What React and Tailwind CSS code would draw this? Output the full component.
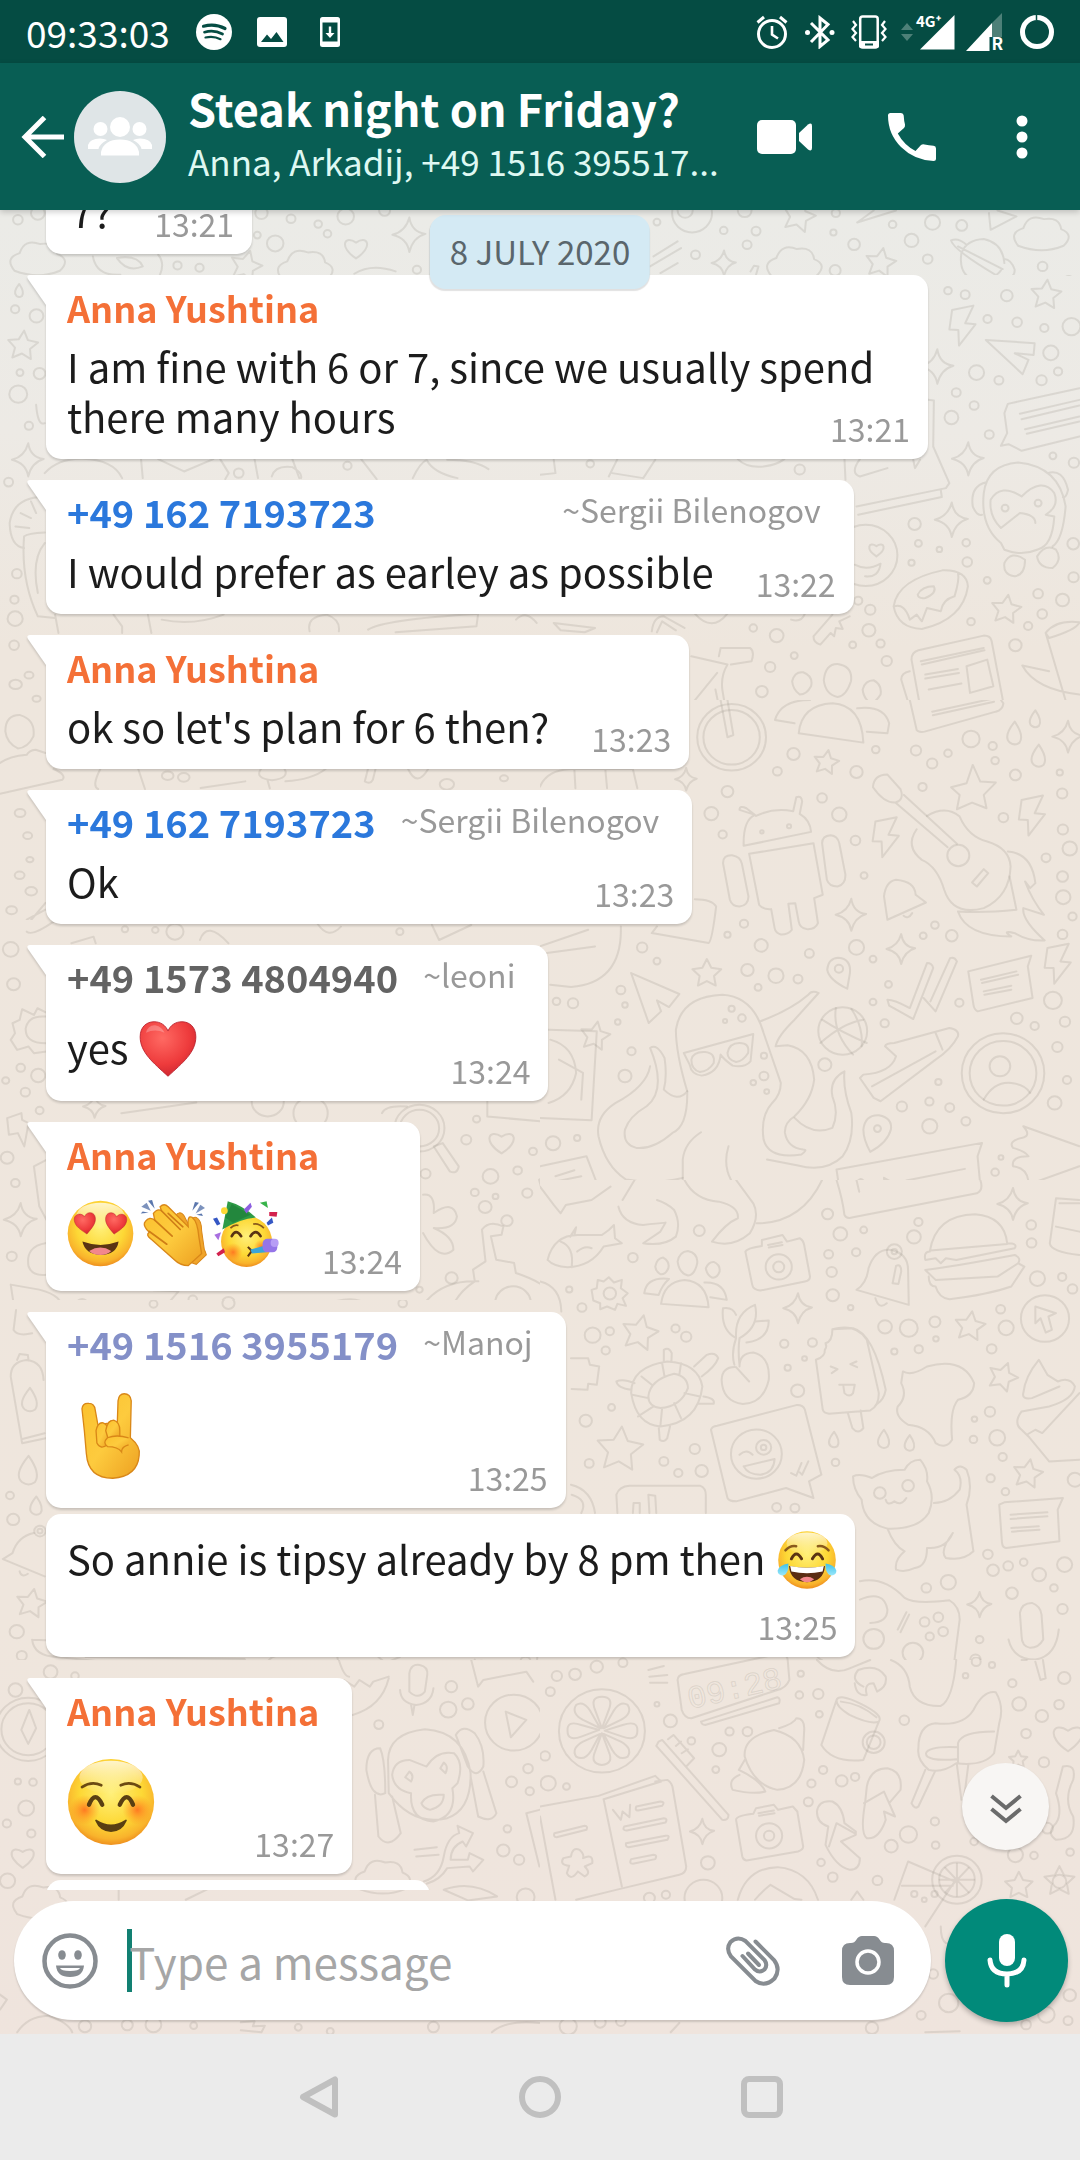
import React from "react";

/* ---------- wallpaper doodles ---------- */

const star = (x, y, r, a = 0) => {
  let d = "";
  for (let i = 0; i < 10; i++) {
    const k = i % 2 ? r * 0.5 : r;
    const t = ((a + i * 36 - 90) * Math.PI) / 180;
    d += `${i ? "L" : "M"}${(x + k * Math.cos(t)).toFixed(1)} ${(y + k * Math.sin(t)).toFixed(1)}`;
  }
  return d + "Z";
};
const spark = (x, y, r) =>
  `M${x} ${y - r}Q${x + r * 0.12} ${y - r * 0.15} ${x + r * 0.9} ${y - r * 0.05}Q${x + r * 0.2} ${y + r * 0.15} ${x} ${y + r}Q${x - r * 0.12} ${y + r * 0.2} ${x - r * 0.95} ${y}Q${x - r * 0.2} ${y - r * 0.2} ${x} ${y - r}Z`;
const heart = (x, y, r) =>
  `M${x} ${y + r}C${x - r * 1.5} ${y} ${x - r} ${y - r * 1.1} ${x} ${y - r * 0.4}C${x + r} ${y - r * 1.1} ${x + r * 1.5} ${y} ${x} ${y + r}Z`;
const cloud = (x, y) =>
  `M${x - 70} ${y + 38}Q${x - 100} ${y} ${x - 55} ${y - 15}Q${x - 40} ${y - 60} ${x + 5} ${y - 42}Q${x + 50} ${y - 50} ${x + 55} ${y - 12}Q${x + 95} ${y + 5} ${x + 62} ${y + 38}Q${x} ${y + 65} ${x - 70} ${y + 38}Z`;
const drop = (x, y, r) => `M${x} ${y - r}Q${x - r} ${y + r * 0.3} ${x - r * 0.4} ${y + r * 0.8}Q${x} ${y + r * 1.1} ${x + r * 0.4} ${y + r * 0.8}Q${x + r * 0.8} ${y + r * 0.2} ${x} ${y - r}Z`;
const bolt = (x, y) => `M${x - 30} ${y - 45}L${x + 32} ${y - 58}L${x + 8} ${y - 5}L${x + 38} ${y - 2}L${x - 10} ${y + 62}L${x - 12} ${y + 15}L${x - 38} ${y + 14}Z`;

/* at: placement of the panel, clip: [x, y, width, height], c: circles, p: outlines */
const PANELS = [
  {
    at: "translate(540 700) scale(.344 .333)",
    clip: [540, 700, 540, 480],
    c: "557 112 100,557 112 82,545 275 17,498 341 20,531 404 12,820 294 14,870 344 21,917 422 14,920 216 18,737 162 18,690 214 13,976 149 11,1093 152 15,1140 191 15,1186 160 11,1253 117 25,1316 138 12,1323 182 11,1382 225 16,1112 261 12,1347 353 14,1511 218 9,1518 281 15,1520 389 15,1540 446 21,1471 474 13,1519 530 16,1521 592 21,1548 650 12,1519 704 14,942 527 10,593 672 12,545 705 9,643 737 19,783 761 13,920 743 22,968 778 10,1148 676 11,1114 708 10,1197 708 17,603 811 18,686 828 22,750 838 13,634 863 10,297 743 15,340 784 10,235 871 13,247 916 8,48 905 11,96 911 15,226 967 8,266 1055 12,247 1129 19,38 1331 21,108 1315 9,869 807 12,1013 854 10,968 907 10,1002 971 12,1219 909 12,1491 902 26,1386 956 17,1438 979 12,1526 966 15,1504 1042 15,1532 1141 12,1496 1210 20,1158 1147 9,1132 1206 12,1052 1221 15,1191 1224 13,1238 1265 13,1133 1280 22,828 1095 19,651 1068 9,651 1129 13,620 1149 8,659 1176 7,1346 1121 120,1346 1121 97,1337 1100 30,880 994 71,1216 467 32,557 927 9,587 955 11,538 964 6,724 379 6,645 396 5,1323 1418 11,1340 1374 7,981 1287 10,530 60 0",
    p: [
      "M592 438Q590 360 625 345L580 330Q580 315 600 325L628 348Q680 322 736 334L745 292Q760 285 762 305L755 342Q785 360 788 396Z",
      "M608 462L795 430L822 585L797 595L808 670Q800 690 775 688Q755 685 752 665L742 610L722 612L732 690Q720 705 700 704Q685 700 682 685L672 628Q650 630 637 615Z",
      "M532 490Q532 465 558 466Q583 470 587 492L606 590Q605 618 580 620Q558 620 552 600Z",
      "M820 430Q820 408 845 406Q865 408 870 430L888 525Q888 555 865 560Q840 560 834 540Z",
      "M1033 308L1185 442M1058 285L1212 432M968 262Q970 225 1010 224L1048 268Q1060 300 1033 308Q1000 310 968 262Z",
      "M1125 348Q1180 315 1220 350Q1245 410 1300 425Q1365 445 1368 500Q1365 590 1290 625Q1200 650 1175 570Q1155 500 1110 480Q1060 440 1095 388",
      "M1256 548L1290 508L1303 520L1270 560Z",
      "M1360 455Q1430 460 1440 550L1425 565L1410 545Q1430 600 1465 645L1405 625Q1400 660 1467 722Q1420 725 1380 700Q1340 690 1370 710Q1240 710 1215 635Q1290 640 1385 630L1365 530",
      "M1010 660L1000 590Q1005 545 1035 540Q1090 545 1092 585L1122 608ZM1057 648Q1070 660 1082 640",
      "M1010 900Q1030 900 1075 925L1125 790Q1140 790 1143 805L1085 958L1015 918ZM1115 895L1150 935L1212 785Q1205 770 1192 775L1135 905",
      "M1245 815L1428 768L1418 800L1432 895L1272 935Q1262 930 1260 915ZM1282 840L1385 815M1285 850L1390 825M1290 875L1370 858M1292 885L1370 870",
      "M835 810Q838 775 868 774Q905 778 901 820L893 867Q840 840 835 810Z",
      "M265 820L405 883L375 922L340 902L352 935L316 970Z",
      "M940 1290Q945 1245 985 1247Q1025 1255 1020 1290Q1010 1330 960 1357Q940 1320 940 1290Z",
      "M820 960Q880 1000 950 1030M815 1030Q880 970 940 960M860 925Q850 1000 910 1065M905 928Q940 980 935 1040",
      "M930 1135L940 1125Q1020 1120 1035 1070L1003 1040Q1005 1030 1030 1030L1190 985Q1220 990 1215 1010Q1195 1050 1150 1080L990 1205L970 1195ZM965 1160L1150 1055M1150 1000L1170 1050",
      "M1290 1200Q1320 1145 1370 1150Q1410 1155 1425 1180",
      "M428 1175Q395 1060 395 990Q410 890 530 885Q620 890 650 1000L700 1150Q700 1185 675 1210Q640 1250 650 1320Q665 1380 760 1365Q780 1350 765 1350Q720 1345 712 1300Q710 1270 740 1250Q790 1200 797 1140Q790 1050 720 1037L685 1040Q690 1010 740 960L810 880Q790 870 780 885Q730 930 640 965",
      "M418 1060L620 1003L612 1085Q595 1105 560 1098Q535 1080 525 1065Q520 1120 470 1128Q440 1125 435 1095ZM440 1080Q445 1055 480 1057Q510 1060 505 1090Q490 1115 465 1117Q440 1110 440 1080ZM545 1060Q550 1030 580 1030Q610 1030 605 1060Q590 1085 570 1087Q545 1080 545 1060Z",
      "M428 1175Q430 1280 385 1300Q330 1350 280 1345Q240 1335 247 1290Q260 1250 310 1220Q370 1170 320 1045Q340 1030 362 1075Q370 1130 360 1170Q400 1210 428 1175M320 1100Q310 1160 220 1210Q160 1250 170 1310Q190 1400 250 1440Q340 1455 415 1435",
      "M415 1500L415 1380Q420 1330 468 1298M548 1340Q530 1400 560 1450L610 1498M740 1255Q790 1310 850 1285Q870 1240 850 1190Q840 1140 885 1115Q880 1170 905 1240Q915 1320 880 1370Q830 1420 750 1398L660 1380",
      "M862 1410L1285 1330L1272 1370L1282 1480M862 1410L875 1500M1065 1443L1235 1408M1000 1435L1035 1455L1003 1478ZM920 1450Q930 1430 942 1445L948 1475Q935 1500 922 1480Z",
      "M1405 1280L1568 1340M1405 1280Q1430 1310 1400 1315Q1360 1325 1375 1345Q1410 1355 1420 1370Q1370 1370 1375 1400Q1420 1405 1420 1455L1568 1400",
      "M25 990L165 995L150 1262L0 1255M30 1020Q100 1040 105 1120Q90 1190 25 1210M55 1080L125 1120L120 1200",
      "M0 1400L135 1370L165 1450M45 1430L100 1412M50 1445L120 1430M130 1490L150 1450L195 1475",
      "M340 680L325 700L490 730Q500 725 512 620Q500 598 450 598M235 680Q240 850 90 862L30 855M0 740L140 690M20 760L160 740",
      "M1195 262L1240 250L1258 195L1280 245L1325 248L1290 285L1298 325L1256 308L1212 328L1220 285Z",
      "M525 0L545 112L562 105L545 0M683 60Q700 0 785 0M683 60L740 70M752 100Q760 15 850 10Q935 15 940 128ZM922 25Q1000 15 1015 70L1010 100L950 95M1075 0L1095 90Q1100 98 1118 95L1325 35Q1345 30 1347 10L1340 0M1140 35L1320 -5M1142 46L1320 5",
      star(485, 822, 44), star(832, 188, 38, 10), star(160, 1010, 45, 10), spark(425, 238, 34), spark(905, 645, 48), spark(1050, 748, 45), spark(1535, 110, 48),
      "M0 260Q20 210 90 207L270 207L283 265M100 210L103 265M190 210L195 265",
      bolt(1005, 410), bolt(1430, 345), bolt(1505, 790), drop(1380, 100, 35), drop(1440, 57, 26), drop(1450, 168, 34),
    ],
  },
  {
    at: "translate(540 260) scale(.344 .333)",
    clip: [540, 275, 540, 425],
    c: "1461 20 14,1537 31 14,1186 92 11,1236 104 13,1357 107 17,1301 177 12,1387 187 14,1466 204 12,1545 200 26,1485 279 22,1269 338 22,1334 361 13,1458 361 15,1506 335 12,1210 398 13,1262 437 13,1196 473 20,1306 524 13,1491 588 10,1552 609 15,1089 793 18,1100 851 10,1161 869 8,1239 849 11,1242 907 14,1080 909 9,1300 962 10,1550 852 17,1551 953 15,1448 1002 14,1519 1021 19,960 1050 15,925 1023 12,956 1112 19,990 1152 12,909 1156 10,1008 1204 15,1253 1086 11,1419 1099 12,1460 1063 14,688 1128 20,620 1105 11,739 1188 10,669 1222 15,645 1296 17,1382 1157 18,146 612 11,755 629 15,947 887 92,1352 745 10,1448 730 10",
    p: [
      "M1290 700Q1300 615 1390 608Q1510 620 1528 740Q1520 840 1490 860M1290 700Q1280 800 1340 850L1350 870Q1400 890 1445 870Q1490 860 1495 770L1470 765Q1510 740 1495 700Q1460 650 1400 710Q1340 670 1310 720Q1305 770 1340 805L1395 760Q1440 765 1440 790M1295 668Q1250 680 1258 740Q1270 770 1285 765M1475 640Q1520 625 1535 690Q1530 715 1520 712",
      "M1350 910Q1370 870 1410 900Q1410 945 1380 950Q1345 945 1350 910ZM1445 890Q1470 850 1500 870Q1520 900 1490 925Q1450 925 1445 890Z",
      "M1568 385L1360 432L1350 460L1358 520L1340 558L1362 553L1400 573L1568 530M1395 462L1568 420M1400 478L1568 437M1410 508L1568 470M1415 522L1568 485",
      "M1028 1040Q1040 960 1170 932Q1240 930 1244 980Q1230 1080 1110 1108Q1040 1105 1028 1040ZM1030 1040Q1060 1030 1075 1080L1095 1065L1110 1085L1125 1045L1165 1055Q1170 1020 1205 1010Q1220 960 1215 940M1098 1005Q1110 980 1145 980Q1155 1000 1120 1015Q1100 1018 1098 1005Z",
      "M1080 1200Q1080 1178 1100 1172L1290 1128Q1310 1128 1313 1145L1347 1330Q1345 1350 1325 1355L1118 1415Q1095 1415 1090 1395L1050 1260Q1050 1240 1075 1235M1080 1200L1118 1415M1107 1205L1290 1165M1110 1215L1292 1172M1120 1245L1215 1228M1120 1257L1218 1240M1130 1290L1225 1272M1240 1220L1300 1200L1318 1280L1250 1300Z",
      "M825 1262Q830 1212 865 1213Q910 1220 904 1265Q890 1310 865 1312Q830 1305 825 1262ZM733 1265Q740 1235 765 1238Q795 1250 788 1280Q775 1305 755 1305Q735 1290 733 1265ZM938 1290Q945 1262 970 1262Q995 1275 990 1305Q975 1330 960 1330Q940 1315 938 1290Z",
      "M885 595L888 660M930 598Q900 640 930 650L1010 625M1085 600L1090 625L1105 600M1128 420L1145 422L1143 560L1190 670L1180 685L920 740M1165 690L1168 712L925 765",
      "M520 1190L525 1165L610 1165Q625 1175 615 1205L555 1215M440 1190L545 1215Q525 1250 530 1290L538 1340M510 1290L520 1340M440 1335L515 1240",
      "M850 1065L795 1130Q795 1150 815 1155L845 1120L855 1130L860 1105L880 1108L870 1085L900 1070M730 1080Q760 1090 770 1062M325 1115Q330 1070 360 1070L420 1105M340 1118L355 1085L395 1112M450 1062Q500 1120 545 1062M40 1090L160 1105L130 1118L60 1112Z",
      "M1470 1120Q1500 1080 1568 1088Q1560 1110 1480 1135ZM1470 1120L1530 1330L1568 1325M1568 1305Q1440 1290 1402 1218L1480 1235",
      "M1296 240L1438 250L1435 285L1380 280L1420 300L1403 343Z",
      "M200 650L225 598M210 640L300 655L335 600M575 598Q600 625 650 620Q690 615 710 598M0 645L45 640L40 600",
      star(1471, 105, 46, 5), star(1355, 1050, 45, 8), spark(1245, 597, 50), spark(1197, 780, 52), spark(1155, 320, 52), bolt(1228, 195), heart(978, 868, 22),
      "M915 915Q950 935 990 912Q985 955 945 950",
    ],
  },
  {
    at: "translate(540 0) scale(.344 .333)",
    clip: [540, 0, 540, 275],
    c: "442 640 58,422 632 22,340 667 10,534 692 11,628 694 13,602 735 13,452 765 13,853 698 9,1025 674 11,1141 668 22,1226 677 16,913 734 17,1080 722 20,1127 778 14,858 812 16,1461 800 14,860 640 12,595 632 20",
    p: [
      cloud(742, 790), cloud(1460, 700), star(752, 650, 50, 15), star(990, 790, 46, 10), spark(535, 790, 38),
      "M1225 760Q1240 720 1290 718Q1345 730 1350 790M1225 760Q1215 830 1270 842Q1320 840 1340 812M1195 722Q1200 750 1340 835Q1380 840 1380 810Q1370 780 1350 778M1195 722Q1215 712 1240 735M1215 740L1345 808",
      "M922 668L1035 632M922 668L970 632M1310 690L1305 640M1310 690L1385 650L1330 632M330 770L400 725M320 800L410 745M350 820L400 790M612 815L622 798L635 800L628 825",
    ],
  },
  {
    at: "translate(0 0) scale(.344 .333)",
    clip: [0, 0, 540, 275],
    c: "52 660 14,110 640 20,846 657 13,925 673 11,952 702 11,1005 650 24,800 731 24,748 706 10,760 640 18,516 797 12,580 804 12,1212 810 12,1118 632 16",
    p: [cloud(112, 775), cloud(890, 800), spark(1190, 705, 52), star(715, 800, 48, 15), heart(1035, 742, 34), "M270 770Q280 830 350 825M340 775Q370 820 415 800Q400 765 340 775M460 765Q480 790 465 825M1030 822Q1080 790 1150 815"],
  },
  {
    at: "translate(0 260) scale(.344 .333)",
    clip: [0, 275, 540, 385],
    c: "44 148 12,106 168 20,58 338 10,115 341 17,53 403 26,84 498 12,25 667 13,49 942 14,42 1020 12,44 1077 22,41 1157 14,694 640 14,1010 618 12",
    p: [star(66, 258, 46, 5), spark(82, 600, 50), drop(56, 92, 20),
      "M130 640Q170 595 240 597Q330 600 355 655M410 598L415 655M460 598L535 635L620 598M640 598L665 640L655 658M740 598L750 655M850 598L870 655M790 650Q800 615 850 622Q880 640 875 655M1050 598L1095 658M1200 655Q1220 610 1240 600Q1260 640 1330 655M1300 600Q1380 600 1420 628",
      "M130 712Q40 710 28 790Q30 860 70 865M70 830Q80 820 130 818M70 830Q60 960 110 1070L160 1075M130 850Q90 900 110 1000M60 760L90 775M45 800L85 805M90 725L105 760M160 1065L170 1120M330 1065L355 1100L355 1120M430 1065L440 1120M470 1080Q560 1100 650 1065M900 1115Q890 1070 950 1065Q990 1080 985 1115M1070 1110Q1110 1080 1390 1062L1385 1100L1150 1118M1500 1080Q1530 1050 1560 1090",
      "M105 435Q110 500 130 490"],
  },
  {
    at: "translate(0 480) scale(.446 .333)",
    clip: [0, 660, 540, 260],
    c: "65 586 10,35 614 14,82 657 9,45 1000 12,62 1068 10,67 1140 8,44 1187 11,70 1235 13,26 1292 12,376 888 13,412 893 13,1130 896 9,1002 914 16,1466 889 9,283 1350 9,346 1350 8,394 1345 20",
    p: [
      "M12 755Q12 705 45 706Q80 720 75 770Q62 805 40 806Q15 790 12 755ZM0 850Q20 830 60 825Q65 812 80 810L102 820M0 942L140 900Q150 885 120 868M225 868Q205 920 220 928M310 868L325 928M450 925L550 905M585 868Q570 895 610 902Q650 895 638 868M600 902L605 926M640 905Q700 900 730 868M825 868L818 905Q830 915 836 900L842 868M915 868Q935 925 960 868M1222 928Q1225 895 1240 888L1258 868M1300 868L1305 925M1358 868L1362 925",
      "M102 1270L55 1345Q60 1375 75 1365L135 1330M102 1290L60 1320",
      spark(1535, 895, 30),
    ],
  },
  {
    at: "translate(0 920) scale(.357 .333)",
    clip: [0, 920, 540, 380],
    c: "30 88 22,38 193 18,16 482 10,58 444 12,71 517 13,107 467 20,111 572 11,20 714 18,43 790 12,33 1010 14,230 1152 14,540 1140 12,640 1150 18,350 28 9,435 30 9,490 35 24,1120 35 10,1335 598 10,1306 660 14,1374 770 22,1330 818 11,1388 830 8,1450 752 12,1493 695 11,1550 670 20,1359 862 18,1420 903 16,1477 820 14,1192 762 14,1265 1075 17,1175 1110 9,1175 625 55,1175 625 70,1437 1150 50,870 580 48,750 545 45",
    p: [heart(1405, 665, 36), spark(58, 900, 50), spark(265, 560, 34),
      "M130 278L105 265L95 285L62 268L55 300L35 310L42 340L30 360L48 390L80 380L95 400L130 395M128 370Q70 370 72 325Q80 285 128 290M20 595L60 580L62 600L80 610L68 680L50 640L25 645Z",
      "M1215 680L1240 670L1285 740Q1280 765 1260 755ZM1185 825Q1220 820 1215 880Q1270 840 1280 890Q1275 930 1215 925Q1270 950 1270 990Q1230 1030 1185 940",
      "M1350 930Q1370 900 1410 920L1405 945L1375 950L1390 1020L1440 1030L1445 1060Q1560 1100 1568 1170M1350 930L1360 1025L1325 1050L1330 1085Q1280 1120 1265 1170M1180 1165Q1230 1080 1340 1085M1568 740L1510 780L1530 860L1568 870M1365 545L1365 590L1568 610M1070 580Q1080 555 1140 560",
      "M30 1095L110 1110Q180 1130 170 1168M30 1095L45 1200M60 1150L110 1160M130 970Q70 980 80 1040Q90 1070 130 1065M95 740L130 720M95 740L110 860L130 900M340 580L550 548M460 1165L500 1115L430 1112M880 1168Q1000 1110 1040 1168M75 35Q90 50 150 5M200 70L262 50L268 70M560 60Q580 0 640 70M890 12Q920 60 955 20M1210 15L1230 60L1320 15"],
  },
  {
    at: "translate(0 1300) scale(.357 .333)",
    clip: [0, 1300, 540, 360],
    c: "28 587 11,37 659 17,47 996 20,61 1068 14,141 1115 18,208 1122 11,112 694 16,112 694 7,37 1172 40,1265 1158 16,1472 1085 14,1348 1097 14,640 10 17,430 12 11,1128 10 12",
    p: [star(88, 912, 45, 10), drop(80, 512, 44), drop(102, 618, 28), drop(84, 300, 36),
      "M30 230Q30 185 75 180Q120 185 122 240M30 230L62 430L128 415M60 418L125 400M48 180L55 162L78 165L80 182M45 30L38 90Q50 110 90 100M95 700Q50 710 35 760L8 778L125 830M55 815Q60 835 78 822",
      "M90 1020Q95 1070 160 1072L680 1130Q700 1110 685 1078L240 1072M128 1022L90 1020M740 1130Q740 1080 770 1070M945 1072Q960 1160 985 1130L1000 1160L1025 1140L1045 1165L1085 1145Q1070 1170 1010 1190M1150 1110Q1160 1090 1180 1095Q1200 1100 1198 1120L1190 1160Q1150 1180 1150 1150ZM1122 1145Q1120 1190 1165 1195Q1210 1190 1215 1150M1310 1130L1330 1080M1310 1130Q1325 1175 1350 1145L1475 1130Q1500 1160 1505 1072M1060 1072L1080 1090L1120 1072"],
  },
  {
    at: "translate(0 1660) scale(.344 .333)",
    clip: [0, 1660, 540, 400],
    c: "82 208 95,82 208 78,45 90 20,147 36 20,218 48 11,52 365 9,96 367 11,76 445 23,20 491 12,91 521 12,22 663 22,1312 80 17,1303 149 24,1360 132 17,1101 194 13,1535 326 14,1487 366 16,1540 394 12,1475 507 11,1463 572 18,1509 600 15,1528 712 26,1494 188 84,247 1100 18,370 1096 16,446 1095 23,563 1098 10,867 1103 10,1260 1102 16,960 1115 10",
    p: [heart(66, 590, 34), cloud(120, 725), cloud(1115, 650),
      "M85 150L105 205L82 252L62 210ZM1470 155L1530 180L1485 232Z",
      "M1190 40Q1195 10 1220 15Q1245 20 1242 45L1235 95Q1215 120 1190 95ZM1163 90Q1165 130 1210 135Q1255 130 1260 85M1205 135L1200 165L1195 135",
      "M1178 352L1190 335Q1205 345 1195 365ZM1280 325L1290 308Q1305 320 1295 340ZM1128 300Q1130 220 1235 208Q1350 215 1368 340Q1370 450 1300 475Q1200 500 1130 400ZM1140 345Q1145 300 1190 300L1240 320Q1270 270 1320 280Q1350 310 1330 370L1315 385Q1330 470 1260 485Q1190 480 1195 400Q1145 390 1140 345ZM1225 430Q1240 400 1290 405Q1290 440 1250 450Q1230 445 1225 430M1065 330Q1065 265 1105 265Q1120 300 1120 400Q1080 420 1065 330ZM1090 405L1100 530Q1130 570 1165 520L1140 410M1325 225Q1345 190 1380 220Q1410 260 1405 320Q1385 360 1360 320ZM1368 350L1390 470Q1430 490 1443 460L1405 335",
      "M1232 665Q1280 650 1290 590Q1300 530 1335 520L1330 498L1375 520L1355 560L1345 545Q1310 560 1310 600L1360 600L1365 580L1405 600L1375 635L1365 620L1300 625Q1280 660 1240 672M1205 570L1270 562M1210 590L1275 585",
      "M1130 50L1085 65L1075 80L1045 60L1030 80L1000 60M985 0Q1000 50 1015 50M1130 55Q1110 140 1025 165M1370 0L1390 80L1405 60L1530 35L1550 65M50 1118Q80 1070 140 1068Q200 1090 210 1118M700 1088L740 1085L735 1100L770 1098L760 1118L700 1112M1290 690Q1370 660 1445 710L1360 722ZM1430 1118Q1470 1080 1568 1090M1568 450L1530 460L1568 620M345 680L345 720M540 720L620 680M0 1050L20 1020L0 1005"],
  },
  {
    at: "translate(540 1180) scale(.344 .333)",
    clip: [540, 1180, 540, 480],
    c: "463 152 16,270 233 14,203 341 18,85 329 9,122 383 13,153 466 23,203 454 12,191 512 12,394 446 12,425 471 15,208 683 10,133 723 18,143 851 13,360 845 13,402 880 12,450 808 15,470 874 18,836 102 16,873 162 20,941 150 10,839 223 13,919 217 12,848 276 15,851 346 18,903 383 8,1100 126 12,1087 171 20,1428 135 14,1429 189 14,1446 296 22,1518 291 12,1548 327 14,1339 388 13,1003 441 20,1072 445 26,1148 426 16,1151 477 8,1101 508 12,1030 515 9,1355 444 22,1313 507 14,792 488 13,710 492 12,769 536 7,720 564 9,749 633 19,1308 696 15,1263 718 8,1329 774 23,1260 779 11,1345 832 12,1310 896 12,1353 936 11,1555 900 21,859 848 11,688 983 13,741 985 13,1302 1124 14,1317 1172 17,1361 1159 14,1406 1148 11,1451 1185 20,1494 1225 11,1525 1155 22,1372 1241 17,1187 1208 22,1123 1225 14,1519 1288 15,1278 1380 11,1266 1440 15,970 1378 30,1084 1420 30,1118 1327 14,1158 1313 14,1172 1356 14,1133 1371 12,629 823 74,650 803 22,650 803 8,694 261 38,694 261 16,1468 416 70,1030 215 22,1030 215 8,988 940 17,1070 918 17",
    p: [
      "M1133 215Q1150 105 1265 103Q1350 110 1358 190Q1390 190 1380 205L1210 240L1180 235L1165 250L1150 235L1120 240Q1115 215 1133 215ZM1120 270Q1200 260 1380 225Q1400 235 1390 250L1330 290L1150 300ZM1130 290Q1130 320 1150 320Q1160 355 1190 358Q1300 345 1370 320L1408 260L1390 250M1135 212L1358 192",
      "M597 215Q600 205 645 198L645 180L705 165L718 185L755 175Q765 180 768 195L785 290Q785 302 770 305L640 332Q620 330 617 315ZM663 195L703 187M665 203L705 195",
      "M920 330Q950 310 955 265Q975 205 1020 210Q1070 220 1070 270L1072 375ZM975 355Q985 390 1008 370M1025 310L1035 258Q1050 250 1050 275L1042 312Z",
      "M400 245Q405 215 430 213Q460 220 457 250Q450 285 430 287Q405 280 400 245ZM335 260Q340 235 358 233Q378 245 373 265Q365 285 350 283Q337 275 335 260ZM482 265Q490 245 505 246Q525 255 522 275Q515 295 500 293Q485 285 482 265ZM352 372Q360 305 420 300Q485 305 490 382ZM303 340Q310 290 375 297Q355 315 345 345ZM478 308Q535 305 543 360L495 352",
      "M22 240Q40 165 110 165L180 165L200 150L215 135L218 175L238 190L185 200Q150 260 80 262Q40 260 22 240ZM60 185Q100 200 92 262M100 165L105 142L88 170M108 215Q130 195 150 205",
      "M150 330L165 325L168 300L185 305L200 292L215 308L238 300L235 325L255 340L240 355L250 378L225 372L218 390L195 380L175 388L175 370L155 362Z",
      "M265 640Q265 560 370 545Q460 550 472 620Q460 730 350 740Q280 735 265 640ZM315 650Q320 600 390 582Q430 590 430 625Q410 680 350 685Q315 680 315 650ZM355 550L362 590M410 550L405 585M295 590L325 615M268 645L315 655M285 710L330 680M350 738L355 685M410 715L390 670M465 650L420 640M360 545L360 510Q375 500 383 520L382 545M448 560L485 525Q510 515 518 535Q510 560 470 590M265 630Q225 625 222 605Q240 595 275 610M475 650Q510 655 505 672L462 672M345 740L348 780Q360 790 370 775L378 740",
      "M565 555Q555 520 570 475M580 555Q575 510 580 475M570 475Q525 450 532 385Q560 380 570 405M570 475Q565 400 625 375Q640 440 580 475M625 425L665 422Q665 480 600 488M580 560Q580 520 620 518Q670 530 665 600Q650 670 590 673Q530 665 528 600Q530 560 570 562L608 605",
      "M850 448Q920 430 950 480L985 640Q985 680 960 692L840 702Q825 700 822 690L802 540Q830 530 828 510Q835 500 830 490Q850 485 850 448ZM850 448L910 445Q970 460 1005 630Q1000 660 980 672M845 560L865 568L848 580M920 545L902 553L922 562M870 615L915 615L910 640Q900 655 885 640L882 620M895 700L908 745Q925 765 940 745L932 692",
      "M1055 575Q1080 590 1125 560Q1230 530 1262 610Q1260 650 1215 660Q1190 690 1198 780Q1180 810 1150 790Q1130 740 1070 735Q1030 710 1040 680Q1070 650 1050 610Z",
      "M497 750Q500 740 515 738L745 676Q765 675 770 690L818 885L782 905L795 955L715 925L570 965Q550 965 545 955ZM592 860L682 838Q680 880 640 885Q605 885 592 860M580 825Q600 805 618 825M730 880L745 888L760 850M755 878L762 885L780 845",
      "M910 890Q930 880 965 895Q1000 870 1060 870Q1075 840 1105 840Q1130 870 1125 905Q1150 950 1130 1000Q1100 1050 1010 1047Q940 1030 935 960Q910 930 910 890ZM1005 960Q1010 980 1030 965Q1050 980 1065 955M1145 970Q1190 970 1220 930Q1230 890 1205 870Q1220 850 1240 870Q1260 920 1240 975L1260 1115Q1230 1145 1180 1135Q1160 1115 1200 1060M1010 1047Q1030 1100 1060 1115Q1030 1140 1035 1170Q1060 1180 1090 1165Q1125 1160 1125 1105Q1180 1110 1200 1060",
      "M1335 975L1350 968L1520 955L1505 990L1510 1085L1355 1105Q1345 1105 1343 1090ZM1368 1005L1475 998M1368 1018L1475 1010M1370 1045L1450 1040M1372 1056L1452 1050",
      "M1405 640Q1410 590 1450 540L1475 585L1505 605Q1540 590 1555 620Q1550 660 1480 680L1400 695M1405 640Q1400 660 1430 655L1510 620M1400 695Q1375 730 1400 750L1420 770L1480 845L1568 840M1415 765L1440 750L1460 760L1568 640",
      "M225 1000L222 945Q230 920 260 918L465 918Q482 925 482 945L482 1000M270 1000L272 970L290 970L290 1000M318 1000L315 945L335 948L338 1000M90 535L140 535L145 555L172 560L165 615L140 612L138 630L92 628M90 915Q150 930 160 1000M92 945Q140 960 120 1000",
      "M930 1205Q1000 1190 1060 1255Q1090 1275 1190 1262Q1220 1280 1220 1320L1205 1440M930 1260Q1000 1230 1010 1290Q1010 1330 960 1330M1040 1350L1065 1298M1048 1358L1073 1305M805 1430Q812 1440 820 1442",
      "M1395 1300Q1400 1270 1430 1270Q1455 1280 1458 1305L1463 1380Q1450 1405 1425 1405Q1400 1400 1400 1370ZM1362 1380Q1375 1440 1440 1440Q1500 1430 1508 1350",
      "M862 0Q880 60 885 105Q890 118 910 112L1270 40Q1290 30 1280 0M920 0L928 35M228 80Q240 130 300 135Q340 130 365 128L350 155L300 190Q360 200 395 170Q410 130 390 90Q370 70 340 60M420 0Q450 60 520 65Q580 80 575 115Q540 130 500 185Q560 205 610 160Q640 110 620 70L570 0M630 130Q760 130 820 0M240 60L275 0M0 20L40 75L60 100L75 75L150 60L205 20",
      "M1568 60L1500 55L1482 190Q1485 215 1568 225M1510 70L1568 70M1500 140L1568 155",
      "M1440 380L1500 400L1478 410L1488 450L1470 458L1455 415L1440 430Z",
      "M0 305Q60 320 62 395",
      star(290, 460, 55, 12), star(232, 810, 70, 5), star(1250, 440, 46, 8), star(1345, 592, 45, 20), star(1418, 883, 45, 10), spark(750, 385, 45), spark(1375, 72, 48), spark(1278, 1275, 38),
      drop(855, 780, 24), drop(1000, 778, 28), drop(1075, 790, 24),
    ],
  },
  {
    at: "translate(540 1660) scale(.344 .333)",
    clip: [540, 1657, 540, 400],
    c: "49 48 15,102 43 17,165 20 18,241 8 13,30 95 13,340 133 7,379 183 19,440 243 11,551 215 12,603 215 14,521 269 20,511 329 10,758 41 9,754 105 11,809 102 15,812 163 10,1059 181 14,15 288 14,24 370 22,77 380 10,823 330 12,789 371 12,877 363 17,916 351 12,780 426 13,851 652 14,817 608 11,488 609 20,1021 559 19,1071 524 25,1148 485 12,1150 556 11,981 662 14,1393 132 20,1459 168 18,1413 221 14,1509 134 14,1524 54 18,1373 70 12,1237 47 8,1465 307 15,1436 587 11,1382 585 22,1541 577 11,1510 665 20,1475 505 16,1262 545 11,180 213 125,666 528 38,666 528 15,970 247 20,970 247 32,1212 660 72,1212 660 52,475 715 55,1143 943 14,1188 1030 28,1108 1067 13,1540 1007 18,1472 1065 24,1535 1083 13,965 1105 18,82 1100 25,175 1088 16,235 1085 14,1413 1095 14,366 705 12,318 715 16,1268 5 13,1314 15 9,1088 703 9,1147 703 9,1117 720 7",
    p: [
      "M180 110Q215 110 200 150L180 205L160 150Q145 110 180 110ZM180 315Q215 312 200 275L180 220L160 275Q145 312 180 315ZM80 213Q78 180 120 195L172 210L120 230Q80 245 80 213ZM283 213Q285 180 240 195L188 212L240 230Q283 245 283 213ZM105 135Q130 120 150 160L175 205L125 180Q90 160 105 135ZM255 135Q230 120 210 160L185 205L235 180Q270 160 255 135ZM105 290Q130 305 150 270L175 222L125 245Q90 265 105 290ZM255 290Q230 305 210 270L185 222L235 245Q270 265 255 290Z",
      "M0 440L170 408L335 348L352 365L185 418M335 365L370 360Q380 365 385 380L425 620Q425 640 405 645L230 688L105 720M185 418L238 680M0 470L45 720M42 520Q38 532 48 532L135 510Q140 498 130 498ZM245 500Q238 512 252 512L365 488Q372 475 360 475ZM250 550Q248 562 258 562L370 540Q380 525 365 528ZM265 598Q258 612 270 612L335 598Q342 585 330 585ZM280 440Q275 452 285 452L355 438Q365 425 350 425ZM212 450L235 480L240 455L260 472L262 435",
      "M90 590Q95 560 115 570Q130 585 125 595Q155 580 152 610L130 620Q150 640 130 650L110 635Q90 665 78 640L85 618Q55 615 68 595Z",
      "M345 245L355 240L548 465Q548 482 530 480L338 258ZM372 238L388 225L448 295L425 320M395 258L410 245M412 280L430 268",
      "M595 290Q590 230 680 210Q760 230 768 300Q760 385 690 390Q620 375 595 290ZM695 205Q740 190 745 175Q770 175 768 210L765 270M595 300L578 330Q640 360 655 395Q620 405 560 390Q545 360 580 345",
      "M570 480Q570 468 620 462L628 445L680 435L692 450L735 440L748 455L765 560Q765 570 750 575L600 602Q590 600 588 590ZM635 460L680 452M637 468L682 460",
      "M862 120L818 255Q850 310 940 300L985 185M862 120Q870 100 930 130Q1000 165 985 185Q960 195 900 165Q860 140 862 120ZM875 125Q930 130 978 172",
      "M805 455Q810 420 850 425Q880 440 885 490L918 515L918 525L875 545L930 595Q930 630 900 630Q860 620 830 555L838 500Q805 490 805 455ZM840 560L862 490L918 522M950 380Q960 325 1010 325Q1055 335 1048 390L1015 430L1032 470L1000 455L1005 480Q985 540 950 535Q930 520 945 430ZM942 430L1000 395L1030 465",
      "M1100 265Q1100 195 1150 190Q1230 200 1260 150Q1290 90 1325 97Q1350 140 1335 190L1320 280Q1290 320 1210 310Q1170 340 1130 330Q1095 300 1100 265ZM1215 250Q1225 215 1320 215M1215 250L1215 310M1122 280Q1130 258 1215 262M1122 280Q1120 305 1212 298M1120 330L1080 430Q1090 450 1100 440L1148 335M1212 315L1225 420M1245 315L1232 420",
      "M1400 0L1415 0M1440 5L1455 60L1470 55L1462 0M940 80Q900 60 925 30Q980 10 1005 50Q1010 80 980 95L970 70Q940 70 950 105Q920 110 915 70",
      "M1070 605L1205 665L1120 800M1070 605L1030 720M1052 678L1200 678M1212 612L1212 708M1162 660L1262 660M1178 624L1246 698M1246 624L1178 698",
      "M1520 320Q1560 310 1550 360Q1520 420 1550 470Q1560 540 1500 540Q1470 520 1500 490Q1520 460 1500 400Z",
      "M575 720Q600 625 690 622Q780 630 808 720M625 720Q640 700 670 675L740 718L760 720M905 720L922 695L940 720",
      "M400 60Q400 45 420 42L700 -20Q718 -18 720 0L725 60Q715 85 690 90L440 175Q420 175 412 150ZM468 185Q470 195 480 195L695 130Q700 115 690 112Z",
      "M315 30L360 18M318 50L370 45M320 68L370 68M805 0Q850 50 900 25L960 0M1020 0Q1070 20 1075 80Q1090 140 1165 138Q1200 120 1210 0",
      "M1120 1118L1220 1115M1165 800Q1165 840 1180 850M380 1118L405 1090",
      heart(1535, 230, 44), spark(472, 515, 38), star(1392, 678, 42, 0), star(1390, 300, 28, 0), star(1510, 665, 46, 0),
    ],
  },
];

function Wallpaper() {
  return (
    <svg className="absolute inset-0 h-full w-full" viewBox="0 0 1080 2160" preserveAspectRatio="xMidYMin slice" aria-hidden="true">
      <defs>
        <linearGradient id="wall" x1="0" y1="0" x2="0" y2="1">
          <stop offset="0.1" stopColor="#ebebe7" />
          <stop offset="0.2" stopColor="#edeae5" />
          <stop offset="0.3" stopColor="#eee6dd" />
          <stop offset="0.75" stopColor="#efe6dd" />
          <stop offset="0.95" stopColor="#efe4dd" />
        </linearGradient>
        {PANELS.map(({ clip: [x, y, w, h] }, i) => (
          <clipPath id={`clip${i}`} key={i}>
            <rect x={x} y={y} width={w} height={h} />
          </clipPath>
        ))}
      </defs>
      <rect width="1080" height="2160" fill="url(#wall)" />
      <g fill="none" stroke="#857e74" strokeOpacity="0.18" strokeWidth="2" strokeLinejoin="round" strokeLinecap="round">
        {PANELS.map((p, i) => (
          <g key={p.at} clipPath={`url(#clip${i})`}>
            <g transform={p.at}>
              {p.c.split(",").map((c, j) => {
                const [cx, cy, r] = c.split(" ");
                return <circle key={j} cx={cx} cy={cy} r={r} vectorEffect="non-scaling-stroke" />;
              })}
              {p.p.map((d, j) => (
                <path key={j} d={d} vectorEffect="non-scaling-stroke" />
              ))}
            </g>
          </g>
        ))}
        <text x="690" y="1709" transform="rotate(-13 690 1709)" fontSize="32" fontFamily="Liberation Mono, monospace" strokeWidth="1">
          09:28
        </text>
      </g>
    </svg>
  );
}

/* ---------- emoji ---------- */

function EmojiDefs() {
  return (
    <svg className="absolute h-0 w-0" aria-hidden="true">
      <defs>
        <radialGradient id="face" cx="0.5" cy="0.4" r="0.6">
          <stop offset="0" stopColor="#fff07a" />
          <stop offset="0.6" stopColor="#fdd835" />
          <stop offset="0.88" stopColor="#f9b32c" />
          <stop offset="1" stopColor="#ee8f1d" />
        </radialGradient>
        <linearGradient id="shine" x1="0" y1="0" x2="0" y2="1">
          <stop offset="0" stopColor="#fff" stopOpacity="0.75" />
          <stop offset="1" stopColor="#fff" stopOpacity="0" />
        </linearGradient>
        <radialGradient id="red" cx="0.4" cy="0.3" r="0.8">
          <stop offset="0" stopColor="#ff6a63" />
          <stop offset="0.6" stopColor="#ee3b3c" />
          <stop offset="1" stopColor="#c4202c" />
        </radialGradient>
        <radialGradient id="blush">
          <stop offset="0" stopColor="#ff6a1f" stopOpacity="0.85" />
          <stop offset="1" stopColor="#ff8a1f" stopOpacity="0" />
        </radialGradient>
        <linearGradient id="skin" x1="0" y1="0" x2="1" y2="1">
          <stop offset="0" stopColor="#fbc02d" />
          <stop offset="0.5" stopColor="#fdcb3e" />
          <stop offset="1" stopColor="#eda021" />
        </linearGradient>
        <linearGradient id="tear" x1="0" y1="0" x2="0" y2="1">
          <stop offset="0" stopColor="#3fc1e8" />
          <stop offset="1" stopColor="#9be8fb" />
        </linearGradient>
      </defs>
    </svg>
  );
}

const HEART = "M50 97C25 74 2 56 2 29C2 12 13 3 26 3C37 3 46 9 50 19C54 9 63 3 74 3C87 3 98 12 98 29C98 56 75 74 50 97Z";

function Emoji({ name, label, className }) {
  const art = {
    heart: (
      <>
        <path d={HEART} fill="url(#red)" stroke="#b71f2b" strokeWidth="1.5" />
        <path d="M12 22Q16 8 28 9Q40 12 44 22Q28 14 12 22Z" fill="#fff" opacity=".25" />
      </>
    ),
    love: (
      <>
        <circle cx="50" cy="50" r="49" fill="url(#face)" />
        <ellipse cx="50" cy="24" rx="36" ry="20" fill="url(#shine)" />
        <g fill="url(#red)" stroke="#b71f2b" strokeWidth="2">
          <path d={HEART} transform="translate(11 19) rotate(-8 16 16) scale(.33)" />
          <path d={HEART} transform="translate(56 19) rotate(8 16 16) scale(.33)" />
        </g>
        <path d="M23 62Q50 72 77 62Q74 82 50 82Q27 81 23 62Z" fill="#5a3413" />
        <path d="M33 76Q50 66 66 76Q60 82 50 82Q39 82 33 76Z" fill="#f2878c" />
      </>
    ),
    clap: (
      <>
        <g fill="#5b77ad">
          <path d="M12 1L22 13L18 0Z" /><path d="M2 10L16 16L10 4Z" opacity=".8" /><path d="M1 20L13 19L4 17Z" />
          <path d="M88 4L78 16L82 3Z" /><path d="M97 12L83 20L90 7Z" opacity=".8" /><path d="M94 24L84 22L92 20Z" />
        </g>
        <path d="M52 24Q60 14 66 24L74 40Q76 24 84 26Q92 30 92 46L96 74Q98 78 99 82L84 96L60 88Z" fill="#f0a52a" stroke="#d98718" strokeWidth="1.5" />
        <path d="M8 32Q14 24 22 30L20 20Q26 12 32 16L30 10Q36 4 42 10L72 40Q70 22 78 26Q86 32 88 56L92 80L72 98Q60 98 50 88L16 58Q8 52 14 48L10 44Q4 36 8 32Z" fill="url(#skin)" stroke="#d98718" strokeWidth="2" />
        <path d="M22 30L48 54M32 16L60 44M14 47L40 66M42 20L64 40" stroke="#cf7d16" strokeWidth="2.5" fill="none" strokeLinecap="round" />
      </>
    ),
    party: (
      <>
        <circle cx="50" cy="62" r="38" fill="url(#face)" />
        <circle cx="30" cy="78" r="14" fill="url(#blush)" /><circle cx="72" cy="70" r="11" fill="url(#blush)" />
        <path d="M14 44L22 2Q44 8 64 26Q40 28 14 44Z" fill="#2e9b47" />
        <path d="M18 26L28 6L56 22L30 34Z" fill="#1c7a37" opacity=".6" />
        <circle cx="17" cy="16" r="5" fill="#fdd835" />
        <path d="M28 54Q34 42 42 54M56 54Q64 42 71 54" stroke="#5a3413" strokeWidth="4" fill="none" strokeLinecap="round" />
        <path d="M26 42Q32 36 38 38M60 36Q68 34 76 42" stroke="#8a5a1c" strokeWidth="2.5" fill="none" />
        <path d="M52 70L58 76L52 84" fill="none" stroke="#5a3413" strokeWidth="3" />
        <path d="M56 74L78 68L80 78L58 80Z" fill="#38a5d8" />
        <rect x="74" y="58" width="22" height="20" rx="7" fill="#9575e8" /><circle cx="92" cy="64" r="6" fill="#b79df5" />
        <path d="M0 28L6 26L11 36L6 38Z" fill="#3557c4" /><path d="M2 52L12 48L8 60Z" fill="#a86fe0" />
        <path d="M5 80L16 72L18 78L8 84Z" fill="#d3224e" /><path d="M46 14L56 4L58 10L50 20Z" fill="#8d5fe0" />
        <path d="M70 4L80 2L82 12Z" fill="#37b34a" /><path d="M84 18L96 18L95 25L84 24Z" fill="#d3224e" />
        <path d="M80 34L88 26L90 34L82 38Z" fill="#3557c4" />
      </>
    ),
    rock: (
      <>
        <g fill="url(#skin)" stroke="#d98718" strokeWidth="1.5">
          <path d="M17 19Q18 12 25 13Q31 13 32 20L37 48Q41 34 46 36Q52 28 57 40L58 10Q59 2 65 2Q72 2 73 10L72 52Q84 62 82 72Q80 96 52 98Q24 98 22 70Q20 44 17 19Z" />
          <path d="M33 44Q35 34 41 35Q47 37 47 46L46 60Q38 66 34 58Z" />
          <path d="M44 44Q46 32 53 32Q60 34 60 44L60 54L47 54Z" />
          <path d="M70 52Q56 48 46 52Q40 58 46 62Q58 62 62 68Q62 62 70 60" />
        </g>
      </>
    ),
    joy: (
      <>
        <circle cx="50" cy="50" r="48" fill="url(#face)" />
        <ellipse cx="50" cy="22" rx="34" ry="18" fill="url(#shine)" />
        <path d="M24 48Q32 32 41 48M59 48Q68 32 76 48" stroke="#5a3413" strokeWidth="5" fill="none" strokeLinecap="round" />
        <path d="M14 34Q22 25 32 27M68 27Q78 25 86 34" stroke="#8a5a1c" strokeWidth="4" fill="none" strokeLinecap="round" />
        <path d="M20 60Q50 66 80 60Q78 86 50 87Q22 86 20 60Z" fill="#5a2c12" />
        <path d="M22 60Q50 66 78 60L76 69Q50 75 24 69Z" fill="#fff" />
        <path d="M38 82Q50 74 62 82Q56 87 50 87Q44 87 38 82Z" fill="#f2878c" />
        <path d="M19 56Q20 72 11 76Q1 76 1 68Q4 58 19 56ZM81 56Q80 72 89 76Q99 76 99 68Q96 58 81 56Z" fill="url(#tear)" />
      </>
    ),
    smile: (
      <>
        <circle cx="50" cy="50" r="49" fill="url(#face)" />
        <ellipse cx="50" cy="22" rx="36" ry="19" fill="url(#shine)" />
        <circle cx="20" cy="59" r="17" fill="url(#blush)" /><circle cx="80" cy="59" r="17" fill="url(#blush)" />
        <path d="M25 53Q32 36 40 53M60 53Q68 36 75 53" stroke="#5a3f12" strokeWidth="5" fill="none" strokeLinecap="round" />
        <path d="M17 33Q28 26 39 31M61 31Q72 26 83 33" stroke="#6b4a12" strokeWidth="3" fill="none" strokeLinecap="round" />
        <path d="M33 71Q50 82 67 71Q62 83 50 83Q38 83 33 71Z" fill="#5a3f12" stroke="#5a3f12" strokeWidth="2" strokeLinejoin="round" />
      </>
    ),
  }[name];
  return (
    <svg viewBox="0 0 100 100" role="img" aria-label={label} className={`shrink-0 ${className}`}>
      {art}
    </svg>
  );
}

/* ---------- messages ---------- */

function Time({ className = "", children }) {
  return <time className={`block text-[32px] leading-8 whitespace-nowrap text-[#999] ${className}`}>{children}</time>;
}

function Bubble({ author, nick, tone, className = "", children }) {
  return (
    <li className={`relative max-w-[882px] rounded-[15px] bg-white pt-[10px] pr-[18px] pb-[15px] pl-[21px] drop-shadow-[0_2px_1px_rgba(0,0,0,0.16)] ${author ? "mt-[21px] rounded-tl-none" : ""} ${className}`}>
      {author && (
        <>
          <svg className="absolute top-0 -left-[19px] h-[30px] w-5" viewBox="0 0 20 30" aria-hidden="true">
            <path d="M20 0H3Q-1 0 1 4L19 30H20Z" fill="#fff" />
          </svg>
          <h2 className="mb-3 flex h-11 items-start justify-between gap-[25px] pr-[15px]">
            <span className={`font-bold leading-[44px] whitespace-nowrap ${tone}`}>{author}</span>
            {nick && <span className="text-[32px] leading-[38px] whitespace-nowrap text-[#999]">{nick}</span>}
          </h2>
        </>
      )}
      {children}
    </li>
  );
}

function Row({ time, children }) {
  return (
    <div className="flex items-end justify-between gap-[42px]">
      {children}
      <Time>{time}</Time>
    </div>
  );
}

const ORANGE = "text-4xl text-[#f47037]";
const BLUE = "text-[38px] text-[#2b78dc]";
const GRAY = "text-[38px] text-[#636363]";
const VIOLET = "text-[38px] text-[#8490c8]";
const LINE = "pb-[3px] text-[40px] leading-[50px] text-[#1c1c1c]";

function Messages() {
  return (
    <ol className="-mt-[34px] flex flex-col items-start pl-[46px]">
      <Bubble>
        <Row time="13:21"><p className={`${LINE} pl-1`}>7?</p></Row>
      </Bubble>
      <Bubble author="Anna Yushtina" tone={ORANGE}>
        <p className={`${LINE} flow-root`}>
          I am fine with 6 or 7, since we usually spend there many hours
          <Time className="float-right mt-[21px] -mb-[3px]">13:21</Time>
        </p>
      </Bubble>
      <Bubble author="+49 162 7193723" nick="~Sergii Bilenogov" tone={BLUE}>
        <Row time="13:22"><p className={LINE}>I would prefer as earley as possible</p></Row>
      </Bubble>
      <Bubble author="Anna Yushtina" tone={ORANGE}>
        <Row time="13:23"><p className={LINE}>ok so let's plan for 6 then?</p></Row>
      </Bubble>
      <Bubble author="+49 162 7193723" nick="~Sergii Bilenogov" tone={BLUE}>
        <Row time="13:23"><p className={LINE}>Ok</p></Row>
      </Bubble>
      <Bubble author="+49 1573 4804940" nick="~leoni" tone={GRAY}>
        <Row time="13:24">
          <p className={`${LINE} flex h-[75px] items-center gap-[10px]`}>yes<Emoji name="heart" label="heart" className="mt-1 size-[58px]" /></p>
        </Row>
      </Bubble>
      <Bubble author="Anna Yushtina" tone={ORANGE}>
        <Row time="13:24">
          <p className="flex gap-[6px] pt-3 pb-[9px]">
            <Emoji name="love" label="heart eyes" className="size-[67px]" />
            <Emoji name="clap" label="clapping hands" className="size-[67px]" />
            <Emoji name="party" label="partying face" className="size-[67px]" />
          </p>
        </Row>
      </Bubble>
      <Bubble author="+49 1516 3955179" nick="~Manoj" tone={VIOLET}>
        <Row time="13:25"><p className="pt-[14px] pb-[13px]"><Emoji name="rock" label="sign of the horns" className="size-[88px]" /></p></Row>
      </Bubble>
      <Bubble className="mt-[6px]">
        <p className={`${LINE} flex h-[70px] items-center gap-[12px]`}>So annie is tipsy already by 8 pm then<Emoji name="joy" label="tears of joy" className="mt-1 size-[60px]" /></p>
        <div className="mt-4 flex justify-end"><Time>13:25</Time></div>
      </Bubble>
      <Bubble author="Anna Yushtina" tone={ORANGE}>
        <Row time="13:27"><p className="pt-[14px] pb-[13px]"><Emoji name="smile" label="smiling face" className="size-[88px]" /></p></Row>
      </Bubble>
      <Bubble className="mt-[6px] h-20 w-[384px] shrink-0" />
    </ol>
  );
}

/* ---------- bars ---------- */

function StatusBar() {
  return (
    <div className="flex h-[63px] shrink-0 items-center bg-[#054c43] pr-[26px] pl-[26px] text-white">
      <span className="text-[37px] leading-[54px]">09:33:03</span>
      <svg viewBox="0 0 36 36" className="ml-[26px] size-9" aria-hidden="true">
        <circle cx="18" cy="18" r="18" fill="#fff" />
        <g fill="none" stroke="#054c43" strokeLinecap="round">
          <path d="M7.500 12.200Q19 9 29 14.500" strokeWidth="3.200" />
          <path d="M8.500 18.200Q18 15.500 26.500 20" strokeWidth="2.700" />
          <path d="M9.500 23.500Q17.500 21.500 24.500 25.200" strokeWidth="2.200" />
        </g>
      </svg>
      <svg viewBox="0 0 30 30" className="ml-[25px] size-[30px]" aria-hidden="true">
        <rect width="30" height="30" rx="3" fill="#fff" />
        <path d="M4 25L10 17.500L14 22L19.500 15L26.500 25Z" fill="#054c43" />
      </svg>
      <svg viewBox="0 0 20 30" className="ml-[33px] h-[30px] w-5" aria-hidden="true">
        <rect width="20" height="30" rx="2.500" fill="#fff" />
        <path d="M2.500 5.500H17.500V24.500H2.500Z" fill="#054c43" />
        <path d="M8.800 9.500H11.200V16H14.500L10 21L5.500 16H8.800Z" fill="#fff" />
      </svg>
      <div className="ml-auto flex items-center">
        <svg viewBox="0 0 32 34" className="h-[34px] w-8" fill="none" stroke="#fff" aria-hidden="true">
          <circle cx="16" cy="19" r="13.500" strokeWidth="3" />
          <path d="M16 11V19.500L22 23.500" strokeWidth="2.600" />
          <path d="M1.500 7.500L8 2M30.500 7.500L24 2" strokeWidth="3" />
        </svg>
        <svg viewBox="0 0 30 34" className="ml-[17px] h-[34px] w-[30px]" fill="none" stroke="#fff" strokeWidth="3" aria-hidden="true">
          <path d="M6 8L23 25L15 31.500V3L23 9.500L6 27" />
          <circle cx="2.500" cy="17.500" r="2.500" fill="#fff" stroke="none" />
          <circle cx="27" cy="17.500" r="2.500" fill="#fff" stroke="none" />
        </svg>
        <svg viewBox="0 0 36 34" className="ml-[16px] h-[34px] w-9" fill="none" stroke="#fff" strokeWidth="2.500" aria-hidden="true">
          <rect x="9.200" y="1.500" width="17.500" height="31" rx="2.500" />
          <path d="M8 26H28V31Q28 33 26 33H10Q8 33 8 31Z" fill="#fff" stroke="none" />
          <path d="M14 29.500H22" stroke="#054c43" strokeWidth="2" />
          <path d="M2 6L5 10L1.500 14L5 18L1.500 22L5 26M34 6L31 10L34.500 14L31 18L34.500 22L31 26" strokeWidth="2.200" />
        </svg>
        <svg viewBox="0 0 12 18" className="ml-[14px] h-[18px] w-3" fill="#4d8078" aria-hidden="true">
          <path d="M6 0L12 7H0ZM6 18L12 11H0Z" />
        </svg>
        <span className="relative ml-[6px] block h-9 w-9">
          <svg viewBox="0 0 36 36" className="size-9" aria-hidden="true"><path d="M35.500 1V35.500H1Z" fill="#fff" /></svg>
          <span className="absolute top-0 -left-[3px] text-[15px] leading-[14px] font-bold">4G⁺</span>
        </span>
        <span className="relative ml-[11px] block h-[38px] w-9">
          <svg viewBox="0 0 36 38" className="h-[38px] w-9" aria-hidden="true">
            <path d="M36 0V24H26V10Z" fill="#4d8078" />
            <path d="M26 10V24H23.500V38H0Z" fill="#fff" />
          </svg>
          <span className="absolute -right-px bottom-0 text-[17px] leading-[16px] font-bold">R</span>
        </span>
        <svg viewBox="0 0 34 34" className="ml-[18px] size-[34px]" fill="none" aria-hidden="true">
          <circle cx="17" cy="17" r="14.500" stroke="#fff" strokeWidth="5" />
          <path d="M16.500 0V5" stroke="#054c43" strokeWidth="1.500" />
        </svg>
      </div>
    </div>
  );
}

function Header() {
  return (
    <header className="flex h-[147px] shrink-0 items-center bg-[#085e54] pr-[52px] pl-[21px] text-white shadow-[0_2px_6px_rgba(0,0,0,0.2)]">
      <button aria-label="Back" className="shrink-0">
        <svg viewBox="0 0 44 42" className="h-[42px] w-11" fill="none" stroke="#fff" strokeWidth="5" aria-hidden="true">
          <path d="M43 21H4M23.500 1.500L4 21L23.500 40.500" />
        </svg>
      </button>
      <svg viewBox="0 0 92 92" className="ml-[9px] size-[92px] shrink-0" role="img" aria-label="Group picture">
        <circle cx="46" cy="46" r="46" fill="#dfe5e7" />
        <g fill="#fff">
          <circle cx="46" cy="36" r="10" /><circle cx="26.500" cy="38" r="7" /><circle cx="65.500" cy="38" r="7" />
          <path d="M27 64.500V61Q30 48.500 46 48.500Q62 48.500 65 61V64.500Z" />
          <path d="M14 58V54Q16 47.500 26 47.500Q30 47.500 33 49Q25.500 53 24.500 58ZM78 58V54Q76 47.500 66 47.500Q62 47.500 59 49Q66.500 53 67.500 58Z" />
        </g>
      </svg>
      <div className="ml-[22px] min-w-0 flex-1 pb-[7px] whitespace-nowrap">
        <h1 className="text-[45px] leading-[56px] font-bold">Steak night on Friday?</h1>
        <p className="text-[35px] leading-[50px] text-[#def8f2]">Anna, Arkadij, +49 1516 395517...</p>
      </div>
      <nav className="flex shrink-0 items-center" aria-label="Chat actions">
        <button aria-label="Video call">
          <svg viewBox="0 0 56 34" className="h-[34px] w-14" fill="#fff" aria-hidden="true">
            <rect width="39" height="34" rx="5" />
            <path d="M42 13L51 4.500Q55 2 55 6V28Q55 32 51 29.500L42 21Z" />
          </svg>
        </button>
        <button aria-label="Voice call" className="ml-[75px]">
          <svg viewBox="0 0 48 48" className="size-12" fill="#fff" aria-hidden="true">
            <path d="M2.500 0H13Q15.500 0 15.700 2.500Q16 8 17 11.500Q17.300 13.500 16 15L9.800 20.500Q16 32 27.500 38L33 32Q34.500 31 36.500 31.500Q41 32.500 45.500 32.700Q48 33 48 35.500V45.500Q48 48 45.500 48Q26 47 13 34Q0 21 0 2.500Q0 0 2.500 0Z" />
          </svg>
        </button>
        <button aria-label="More options" className="ml-20">
          <svg viewBox="0 0 12 44" className="h-11 w-3" fill="#fff" aria-hidden="true">
            <circle cx="6" cy="6" r="5.500" /><circle cx="6" cy="22" r="5.500" /><circle cx="6" cy="38" r="5.500" />
          </svg>
        </button>
      </nav>
    </header>
  );
}

function Composer() {
  return (
    <form className="relative flex h-36 shrink-0 items-start gap-[14px] pt-[9px] pr-3 pl-[14px]" onSubmit={(e) => e.preventDefault()}>
      <div className="mt-[2px] flex h-[119px] min-w-0 flex-1 items-center rounded-full bg-white pr-[37px] pl-7 shadow-[0_2px_2px_rgba(0,0,0,0.15)]">
        <button type="button" aria-label="Emoji" className="shrink-0">
          <svg viewBox="0 0 56 56" className="size-14" fill="none" aria-hidden="true">
            <circle cx="28" cy="28" r="25.500" stroke="#878c91" strokeWidth="4.500" />
            <ellipse cx="20" cy="22" rx="3.800" ry="4.800" fill="#878c91" /><ellipse cx="36" cy="22" rx="3.800" ry="4.800" fill="#878c91" />
            <path d="M14 32.500H42Q41 44 28 44Q15 44 14 32.500Z" fill="#878c91" />
            <path d="M18 35H38Q37 38 28 38Q19 38 18 35Z" fill="#fff" />
          </svg>
        </button>
        <span className="ml-[29px] h-[63px] w-[5px] shrink-0 bg-[#128072]" aria-hidden="true" />
        <input aria-label="Message" placeholder="Type a message" className="-ml-[3px] h-[70px] min-w-0 flex-1 bg-transparent text-[44px] outline-none placeholder:text-[#a6a6a6]" />
        <button type="button" aria-label="Attach" className="shrink-0">
          <svg viewBox="0 0 54 50" className="h-[50px] w-[54px]" fill="none" stroke="#878c91" strokeWidth="4" strokeLinecap="round" aria-hidden="true">
            <path d="M29.500 5.500L48 24Q55 33 48.500 42.500Q39 51.500 29.500 45L5 20.500Q-.5 13 4.500 6Q11.500 -.5 19.500 5L38.500 24Q42 29 38.500 33.500Q33.500 37.500 29 33.500L16.500 20" />
            <path d="M22 17.500L33 29" />
          </svg>
        </button>
        <button type="button" aria-label="Camera" className="ml-[62px] shrink-0">
          <svg viewBox="0 0 52 49" className="h-[49px] w-[52px]" aria-hidden="true">
            <path d="M20 0H32Q35.500 0 37.500 3.500Q39.500 7 43 7H44Q52 7 52 15V41Q52 49 44 49H8Q0 49 0 41V15Q0 7 8 7H9Q12.500 7 14.500 3.500Q16.500 0 20 0Z" fill="#878c91" />
            <circle cx="26" cy="26" r="11" fill="none" stroke="#fff" strokeWidth="3.500" />
          </svg>
        </button>
      </div>
      <button type="button" aria-label="Record voice message" className="flex size-[123px] shrink-0 items-center justify-center rounded-full bg-[#018a7a] shadow-[0_3px_5px_rgba(0,0,0,0.25)]">
        <svg viewBox="0 0 40 54" className="h-[54px] w-10" fill="none" stroke="#fff" strokeWidth="5" strokeLinecap="round" aria-hidden="true">
          <rect x="12" y="0" width="16" height="32" rx="8" fill="#fff" stroke="none" />
          <path d="M3 26Q4 40 20 40Q36 40 37 26M20 41V51" />
        </svg>
      </button>
    </form>
  );
}

function SystemNav() {
  return (
    <nav className="relative flex h-[126px] shrink-0 items-center justify-center gap-[180px] bg-[#ebebeb]" aria-label="System">
      <button aria-label="Back key">
        <svg viewBox="0 0 42 42" className="size-[42px]" fill="none" stroke="#c0c0c0" strokeWidth="6" strokeLinejoin="round" aria-hidden="true"><path d="M38 3.500V38.500L6 21Z" /></svg>
      </button>
      <button aria-label="Home key">
        <svg viewBox="0 0 42 42" className="size-[42px]" fill="none" stroke="#c0c0c0" strokeWidth="6" aria-hidden="true"><circle cx="21" cy="21" r="18" /></svg>
      </button>
      <button aria-label="Overview key">
        <svg viewBox="0 0 42 42" className="size-[42px]" fill="none" stroke="#c0c0c0" strokeWidth="6" aria-hidden="true"><rect x="3" y="3" width="36" height="36" rx="5" /></svg>
      </button>
    </nav>
  );
}

export default function App() {
  return (
    <div className="relative flex h-screen flex-col overflow-hidden font-['Noto_Sans_CJK_SC',sans-serif]">
      <Wallpaper />
      <EmojiDefs />
      <div className="relative z-10 flex shrink-0 flex-col">
        <StatusBar />
        <Header />
      </div>
      <main className="relative min-h-0 flex-1 overflow-hidden">
        <Messages />
        <p className="absolute top-[5px] left-1/2 -translate-x-1/2 rounded-2xl bg-[#d4eaf4] px-5 pt-[12px] pb-[14px] text-[33px] leading-[48px] whitespace-nowrap text-[#5a666c] shadow-[0_2px_1px_rgba(0,0,0,0.12)]">8 JULY 2020</p>
        <button aria-label="Scroll to latest" className="absolute right-[31px] bottom-10 flex size-[87px] items-center justify-center rounded-full bg-[#f8f6f4] shadow-[0_2px_3px_rgba(0,0,0,0.18)]">
          <svg viewBox="0 0 32 30" className="mt-1 h-[30px] w-8" fill="none" stroke="#6b6b6b" strokeWidth="4" aria-hidden="true">
            <path d="M1.500 2L16 14L30.500 2M1.500 15L16 27L30.500 15" />
          </svg>
        </button>
      </main>
      <Composer />
      <SystemNav />
    </div>
  );
}
